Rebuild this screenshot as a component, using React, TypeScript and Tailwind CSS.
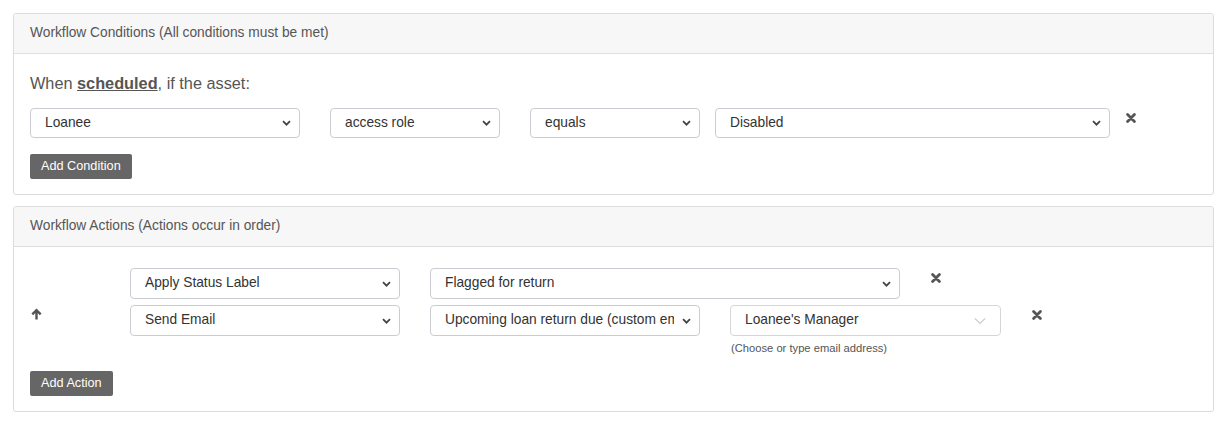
import { ReactNode } from 'react'

function Chevron({ light }: { light?: boolean }) {
  if (light) {
    return (
      <svg width="12" height="8" viewBox="0 0 12 8" className="shrink-0">
        <path d="M1 1.5l5 5 5-5" fill="none" stroke="#cccccc" strokeWidth="1.2" />
      </svg>
    )
  }
  return (
    <svg width="9" height="6" viewBox="0 0 9 6" className="shrink-0">
      <path d="M1 1.2l3.5 3.5L8 1.2" fill="none" stroke="#444" strokeWidth="1.8" />
    </svg>
  )
}

function Select({ value, width, light, h = 'h-[30px]' }: { value: string; width: string; light?: boolean; h?: string }) {
  return (
    <div
      className={`${width} ${h} shrink-0 flex items-center bg-white border rounded-[4px] ${
        light ? 'border-[#d6d6d6] pr-[14px]' : 'border-[#c9cdd2] pr-[8px]'
      } pl-[14px] text-[13.75px] text-[#333]`}
    >
      <span className="flex-1 overflow-hidden whitespace-nowrap">{value}</span>
      <span className={light ? 'ml-2' : 'ml-[8px]'}>
        <Chevron light={light} />
      </span>
    </div>
  )
}

function Remove({ className = '' }: { className?: string }) {
  return (
    <button className={`shrink-0 w-3 h-3 mt-[4px] flex items-center justify-center ${className}`}>
      <svg width="10" height="10" viewBox="0 0 10 10">
        <path d="M1.6 1.6l6.8 6.8M8.4 1.6l-6.8 6.8" stroke="#555" strokeWidth="2.8" strokeLinecap="round" />
      </svg>
    </button>
  )
}

function Panel({ title, children, bodyClass }: { title: string; children: ReactNode; bodyClass: string }) {
  return (
    <div className="border border-[#dcdcdc] rounded-[3px] bg-white">
      <div className="h-[40px] flex items-center px-4 bg-[#f7f7f7] border-b border-[#dedede] text-[13.75px] text-[#555] rounded-t-[3px]">
        {title}
      </div>
      <div className={bodyClass}>{children}</div>
    </div>
  )
}

function DarkButton({ label }: { label: string }) {
  return (
    <div className="flex mt-4">
      <button className="h-[25px] px-[11px] bg-[#666] text-white text-[12.7px] rounded-[2px] leading-none">
        {label}
      </button>
    </div>
  )
}

export default function App() {
  return (
    <div
      className="min-h-screen bg-white p-[13px] flex flex-col gap-[11px]"
      style={{ fontFamily: '"Liberation Sans", Arial, sans-serif' }}
    >
      <Panel title="Workflow Conditions (All conditions must be met)" bodyClass="px-4 pt-[17px] pb-[15px]">
        <p className="text-[16.3px] leading-[24px] text-[#555]">
          When <span className="font-bold underline">scheduled</span>, if the asset:
        </p>
        <div className="flex items-start mt-[13px]">
          <Select value="Loanee" width="w-[270px]" />
          <div className="w-[30px]" />
          <Select value="access role" width="w-[170px]" />
          <div className="w-[30px]" />
          <Select value="equals" width="w-[170px]" />
          <div className="w-[15px]" />
          <Select value="Disabled" width="w-[395px]" />
          <Remove className="ml-[15px]" />
        </div>
        <DarkButton label="Add Condition" />
      </Panel>

      <Panel title="Workflow Actions (Actions occur in order)" bodyClass="px-4 pt-[21px] pb-[15px]">
        <div className="flex flex-col gap-[6px]">
          <div className="flex items-start">
            <div className="w-[100px] shrink-0" />
            <Select value="Apply Status Label" width="w-[270px]" h="h-[31px]" />
            <div className="w-[30px]" />
            <Select value="Flagged for return" width="w-[470px]" h="h-[31px]" />
            <Remove className="ml-[30px]" />
          </div>
          <div className="flex items-start">
            <div className="w-[100px] shrink-0 pl-[1px] pt-[3px]">
              <svg width="11" height="12" viewBox="0 0 11 12">
                <path d="M5.5 11.5V2.5M1.3 6.3l4.2-4.2 4.2 4.2" fill="none" stroke="#555" strokeWidth="2.4" strokeLinejoin="miter" />
              </svg>
            </div>
            <Select value="Send Email" width="w-[270px]" h="h-[31px]" />
            <div className="w-[30px]" />
            <Select value="Upcoming loan return due (custom email)" width="w-[270px]" h="h-[31px]" />
            <div className="w-[30px]" />
            <div className="flex flex-col">
              <Select value="Loanee's Manager" width="w-[271px]" h="h-[31px]" light />
              <span className="mt-[5px] pl-[1px] text-[11.2px] leading-[14px] text-[#555]">
                (Choose or type email address)
              </span>
            </div>
            <Remove className="ml-[30px]" />
          </div>
        </div>
        <DarkButton label="Add Action" />
      </Panel>
    </div>
  )
}
